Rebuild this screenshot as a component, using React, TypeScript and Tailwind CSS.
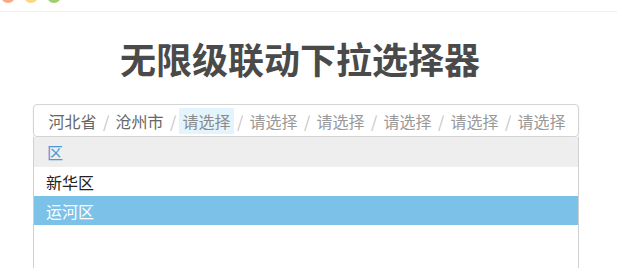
import { useState } from "react";

const levels = ["河北省", "沧州市", "请选择", "请选择", "请选择", "请选择", "请选择", "请选择"];

const options = ["新华区", "运河区"];

export default function App() {
  const [selected, setSelected] = useState(1);
  const font = { fontFamily: '"Noto Sans CJK SC", "Noto Sans", sans-serif' };

  return (
    <main className="h-[268px] overflow-hidden bg-white" style={font}>
      {/* window chrome, mostly cut off */}
      <div className="flex h-[11px] items-start gap-[9px] overflow-hidden pl-[1px]">
        <span className="mt-[-11px] h-[14px] w-[14px] rounded-full bg-[#f7a985]" />
        <span className="mt-[-11px] h-[14px] w-[14px] rounded-full bg-[#fcd585]" />
        <span className="mt-[-11px] h-[14px] w-[14px] rounded-full bg-[#9dd06c]" />
      </div>
      <div className="h-px bg-[#f0f0f0]" />

      <section className="ml-[33px] w-[546px]">
        <h1 className="mt-[28px] pr-[12px] text-center text-[36px] font-bold leading-[36px] text-[#4a4a4a]">
          无限级联动下拉选择器
        </h1>

        <div className="mt-[28px] flex h-[33px] items-center rounded-[4px] border border-[#d4d4d4] pl-[11px] shadow-[0_1px_2px_rgba(0,0,0,0.08)]">
          {levels.map((name, i) => (
            <div key={i} className="flex items-center">
              {i > 0 && (
                <span className="w-[12px] text-center text-[16px] text-[#c4c4c4]">/</span>
              )}
              <span
                className={
                  "px-[3.5px] text-[16px] leading-[26px] " +
                  (i === 2 ? "bg-[#e4f4fc] text-[#8a8a8a]" : i < 2 ? "text-[#666]" : "text-[#999]")
                }
              >
                {name}
              </span>
            </div>
          ))}
        </div>

        <div className="h-[131px] border-x border-[#d0d0d0]">
          <div className="flex h-[30px] items-center bg-[#eeeeee] pl-[13px] text-[16px] text-[#4a9ad8]">
            区
          </div>
          {options.map((name, i) => (
            <div
              key={name}
              onClick={() => setSelected(i)}
              className={
                "flex h-[29px] cursor-pointer items-center pl-[12px] text-[16px] " +
                (selected === i ? "bg-[#7bc1e8] text-white" : "text-[#222]")
              }
            >
              {name}
            </div>
          ))}
        </div>
      </section>
    </main>
  );
}
